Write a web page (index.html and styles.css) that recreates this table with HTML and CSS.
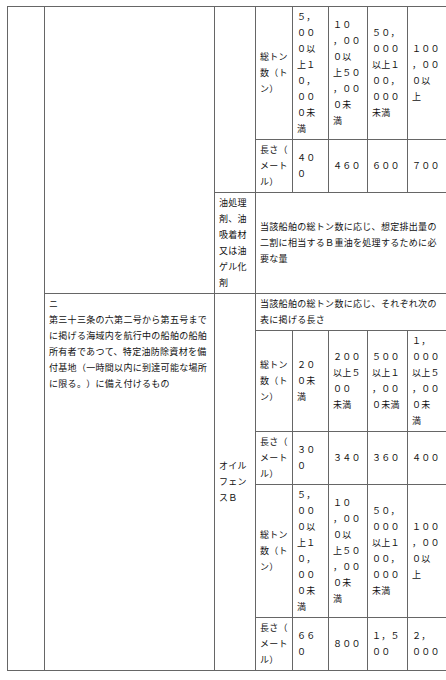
FILE: index.html
```html
<!DOCTYPE html>
<html lang="ja">
<head>
<meta charset="utf-8">
<title>表</title>
<link rel="stylesheet" href="styles.css">
</head>
<body>
<div class="sheet">
  <div class="cell a-c1"></div>
  <div class="cell a-c2-upper"></div>
  <div class="cell a-c3-upper"></div>
  <div class="cell a-c3-oil">油処理<br>剤、油<br>吸着材<br>又は油<br>ゲル化<br>剤</div>
  <div class="cell a-wide3">当該船舶の総トン数に応じ、想定排出量の<br>二割に相当するＢ重油を処理するために必<br>要な量</div>
  <div class="cell a-c2-lower top">ニ<br>第三十三条の六第二号から第五号まで<br>に掲げる海域内を航行中の船舶の船舶<br>所有者であつて、特定油防除資材を備<br>付基地（一時間以内に到達可能な場所<br>に限る。）に備え付けるもの</div>
  <div class="cell a-c3-lower">オイル<br>フェン<br>スＢ</div>
  <div class="cell a-wide4">当該船舶の総トン数に応じ、それぞれ次の<br>表に掲げる長さ</div>

  <div class="cell">総トン<br>数（ト<br>ン）</div>
  <div class="cell">５，<br>００<br>０以<br>上１<br>０，<br>００<br>０未<br>満</div>
  <div class="cell">１０<br>，００<br>０以<br>上５０<br>，００<br>０未<br>満</div>
  <div class="cell">５０，<br>０００<br>以上１<br>００，<br>０００<br>未満</div>
  <div class="cell">１００<br>，００<br>０以<br>上</div>

  <div class="cell">長さ（<br>メート<br>ル）</div>
  <div class="cell">４０<br>０</div>
  <div class="cell">４６０</div>
  <div class="cell">６００</div>
  <div class="cell">７００</div>

  <div class="cell">総トン<br>数（ト<br>ン）</div>
  <div class="cell">２０<br>０未<br>満</div>
  <div class="cell">２００<br>以上５<br>００<br>未満</div>
  <div class="cell">５００<br>以上１<br>，００<br>０未満</div>
  <div class="cell">１，<br>０００<br>以上５<br>，００<br>０未<br>満</div>

  <div class="cell">長さ（<br>メート<br>ル）</div>
  <div class="cell">３０<br>０</div>
  <div class="cell">３４０</div>
  <div class="cell">３６０</div>
  <div class="cell">４００</div>

  <div class="cell">総トン<br>数（ト<br>ン）</div>
  <div class="cell">５，<br>００<br>０以<br>上１<br>０，<br>００<br>０未<br>満</div>
  <div class="cell">１０<br>，００<br>０以<br>上５０<br>，００<br>０未<br>満</div>
  <div class="cell">５０，<br>０００<br>以上１<br>００，<br>０００<br>未満</div>
  <div class="cell">１００<br>，００<br>０以<br>上</div>

  <div class="cell">長さ（<br>メート<br>ル）</div>
  <div class="cell">６６<br>０</div>
  <div class="cell">８００</div>
  <div class="cell">１，５<br>００</div>
  <div class="cell">２，<br>０００</div>
</div>
</body>
</html>
```
FILE: styles.css
```css
html {
  overflow: hidden;
  background: #fff;
}
body {
  margin: 6px 0 0 7px;
  font-family: "Noto Sans CJK JP", "Noto Sans", sans-serif;
  font-size: 9px;
  line-height: 16px;
  letter-spacing: 0.3px;
  text-spacing-trim: space-all;
  font-feature-settings: "fwid" 1;
  color: #111;
}
.sheet {
  display: grid;
  grid-template-columns: 36px 169px 40px 36px 35px 38px 39px 60px;
  gap: 1px;
  padding: 1px;
  background: #666;
  width: max-content;
}
.cell {
  background: #fff;
  padding: 2px 4px;
  white-space: nowrap;
  display: flex;
  flex-direction: column;
  justify-content: center;
}
.top {
  justify-content: flex-start;
}
.a-c1 { grid-column: 1; grid-row: 1 / 9; }
.a-c2-upper { grid-column: 2; grid-row: 1 / 4; }
.a-c3-upper { grid-column: 3; grid-row: 1 / 3; }
.a-c3-oil { grid-column: 3; grid-row: 3; }
.a-wide3 { grid-column: 4 / 9; grid-row: 3; }
.a-c2-lower { grid-column: 2; grid-row: 4 / 9; }
.a-c3-lower { grid-column: 3; grid-row: 4 / 9; }
.a-wide4 { grid-column: 4 / 9; grid-row: 4; }
```
